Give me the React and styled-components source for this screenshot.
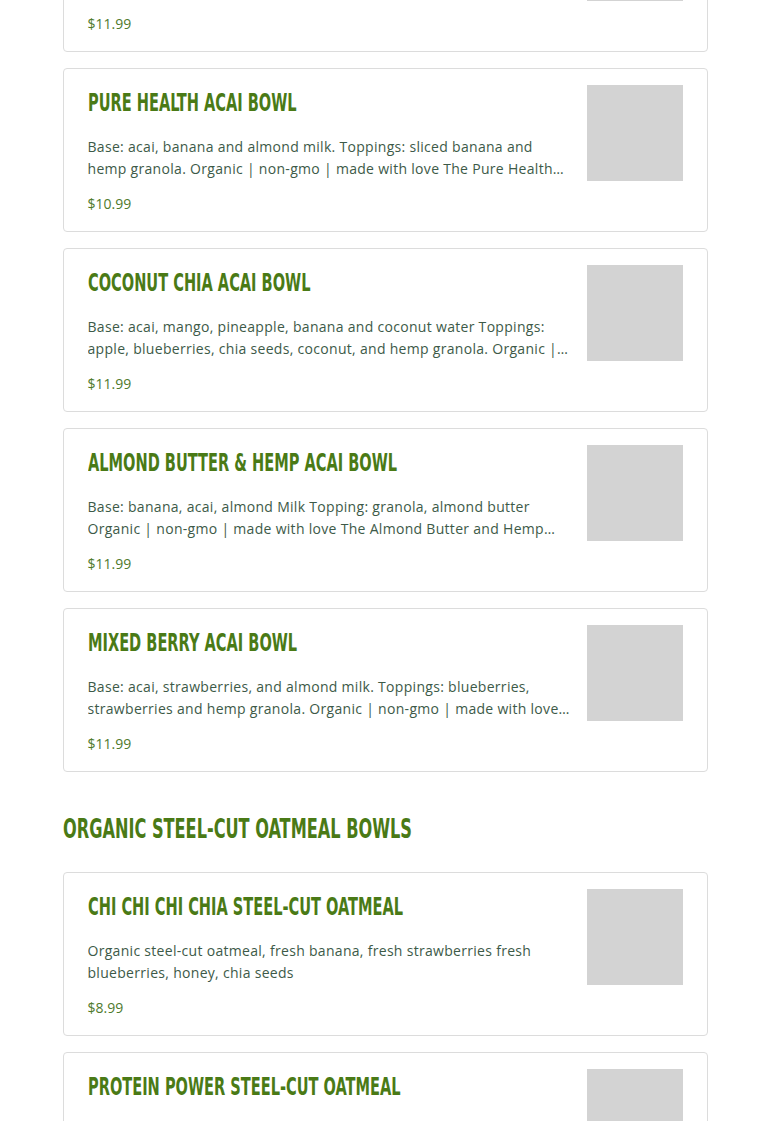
import React from "react";
import styled, { createGlobalStyle } from "styled-components";

const GlobalStyle = createGlobalStyle`
  body {
    margin: 0;
    background: #fff;
    font-family: "Open Sans", "Liberation Sans", sans-serif;
  }
`;

const acaiBowls = [
  {
    name: "Classic Acai Bowl",
    desc: "Base: acai, banana, strawberries and almond milk. Toppings: banana, strawberries, blueberries and hemp granola. Organic | non-gmo | made with love The Classic Acai Bowl is a favorite everyday",
    price: 11.99,
  },
  {
    name: "Pure Health Acai Bowl",
    desc: "Base: acai, banana and almond milk. Toppings: sliced banana and hemp granola. Organic | non-gmo | made with love The Pure Health Acai Bowl is simple and clean",
    price: 10.99,
  },
  {
    name: "Coconut Chia Acai Bowl",
    desc: "Base: acai, mango, pineapple, banana and coconut water Toppings: apple, blueberries, chia seeds, coconut, and hemp granola. Organic | non-gmo | made with love",
    price: 11.99,
  },
  {
    name: "Almond Butter & Hemp Acai Bowl",
    desc: "Base: banana, acai, almond Milk Topping: granola, almond butter Organic | non-gmo | made with love The Almond Butter and Hemp Acai Bowl is packed with protein",
    price: 11.99,
  },
  {
    name: "Mixed Berry Acai Bowl",
    desc: "Base: acai, strawberries, and almond milk. Toppings: blueberries, strawberries and hemp granola. Organic | non-gmo | made with love The Mixed Berry Acai Bowl",
    price: 11.99,
  },
];

const oatmealBowls = [
  {
    name: "Chi Chi Chi Chia Steel-Cut Oatmeal",
    desc: "Organic steel-cut oatmeal, fresh banana, fresh strawberries fresh blueberries, honey, chia seeds",
    price: 8.99,
  },
  {
    name: "Protein Power Steel-Cut Oatmeal",
    desc: "Organic steel-cut oatmeal, almond butter, fresh banana, hemp seeds, granola and honey",
    price: 9.99,
  },
];

const Page = styled.div`
  width: 645px;
  margin: -112px auto 0;
  padding-bottom: 40px;
`;

const Section = styled.section`
  display: flex;
  flex-direction: column;
  gap: 16px;
`;

// condensed display face: DejaVu Sans Condensed squeezed horizontally
const Condensed = styled.span`
  display: inline-block;
  white-space: nowrap;
  transform: scaleX(${(p) => p.$squeeze});
  transform-origin: left center;
`;

const SectionTitle = styled.h2`
  margin: 40px 0 26px;
  font-family: "DejaVu Sans Condensed", "Liberation Sans", sans-serif;
  font-weight: 700;
  font-size: 27px;
  line-height: 34px;
  color: #4a7a16;
  text-transform: uppercase;
`;

const Card = styled.div`
  display: flex;
  gap: 16px;
  height: 164px;
  box-sizing: border-box;
  padding: 16px 24px;
  border: 1px solid #dcdcdc;
  border-radius: 4px;
  background: #fff;
`;

const Info = styled.div`
  flex: 1;
  min-width: 0;
  display: flex;
  flex-direction: column;
`;

const ItemName = styled.h3`
  margin: 0;
  padding-top: 1px;
  font-family: "DejaVu Sans Condensed", "Liberation Sans", sans-serif;
  font-weight: 700;
  font-size: 24px;
  line-height: 34px;
  color: #4a7a16;
  text-transform: uppercase;
`;

const Desc = styled.p`
  margin: 16px 0 0;
  font-size: 14px;
  line-height: 22px;
  letter-spacing: 0.3px;
  color: #3d5a48;
  display: -webkit-box;
  -webkit-line-clamp: 2;
  -webkit-box-orient: vertical;
  overflow: hidden;
`;

const Price = styled.div`
  margin-top: 13px;
  font-size: 14px;
  line-height: 22px;
  color: #4f7a2c;
`;

const Thumb = styled.div`
  flex: 0 0 96px;
  height: 96px;
  background: #d3d3d3;
`;

const MenuItem = ({ item }) => (
  <Card>
    <Info>
      <ItemName>
        <Condensed $squeeze={0.675}>{item.name}</Condensed>
      </ItemName>
      <Desc>{item.desc}</Desc>
      <Price>${item.price.toFixed(2)}</Price>
    </Info>
    <Thumb />
  </Card>
);

export default function App() {
  return (
    <>
      <GlobalStyle />
      <Page>
        <Section>
          {acaiBowls.map((item) => (
            <MenuItem key={item.name} item={item} />
          ))}
        </Section>
        <SectionTitle>
          <Condensed $squeeze={0.665}>Organic Steel-Cut Oatmeal Bowls</Condensed>
        </SectionTitle>
        <Section>
          {oatmealBowls.map((item) => (
            <MenuItem key={item.name} item={item} />
          ))}
        </Section>
      </Page>
    </>
  );
}
